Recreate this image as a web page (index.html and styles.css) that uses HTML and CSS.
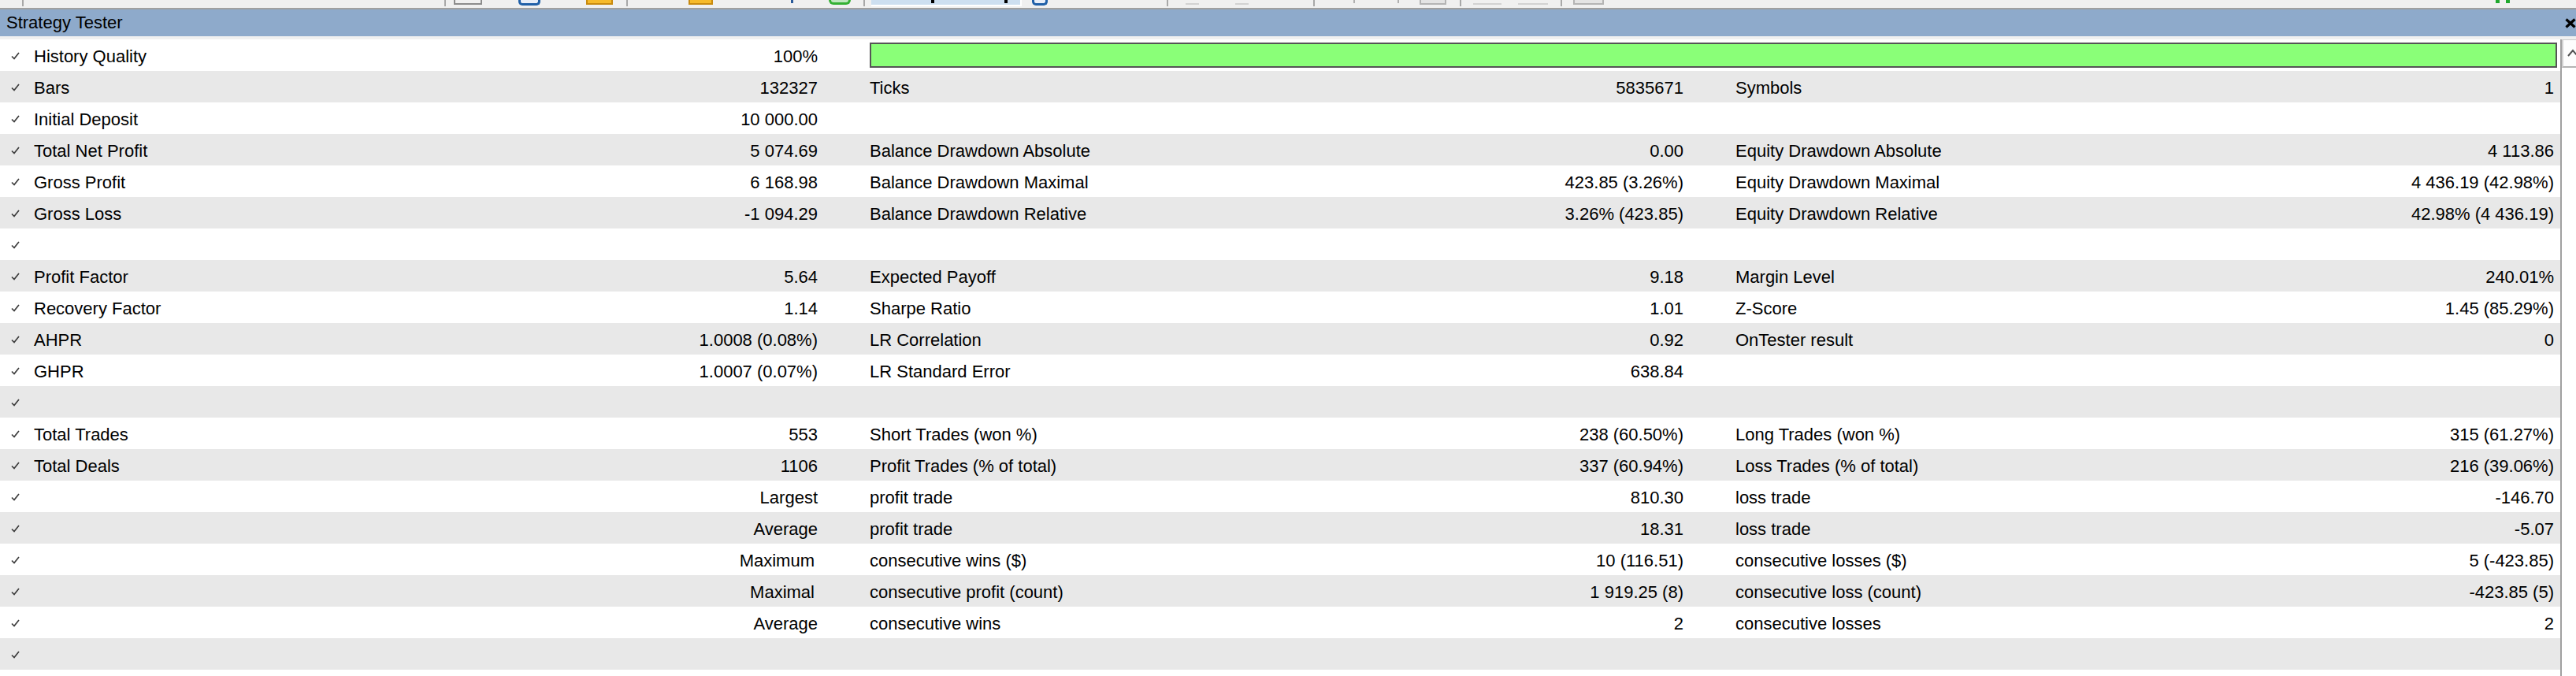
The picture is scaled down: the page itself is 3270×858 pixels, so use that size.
FILE: index.html
```html
<!DOCTYPE html>
<html>
<head>
<meta charset="utf-8">
<title>Strategy Tester</title>
<link rel="stylesheet" href="styles.css">
</head>
<body>
<div class="toolbar">
  <i class="sep m1"></i>
  <i class="sep m2"></i>
  <i class="gico w36 m3"></i>
  <i class="bico w28 m4"></i>
  <i class="oico w34 m5"></i>
  <i class="sep m6"></i>
  <i class="oico w31 m7"></i>
  <i class="tick dk m8"></i>
  <i class="gnico m9"></i>
  <i class="sep m10"></i>
  <i class="sel m11"><b class="dot d1"></b><b class="dot d2"></b></i>
  <i class="bico w20 m12"></i>
  <i class="sep m13"></i>
  <i class="lt w17 m14"></i>
  <i class="lt w17 m15"></i>
  <i class="sep m16"></i>
  <i class="tick m17"></i>
  <i class="tick m18"></i>
  <i class="gico lite w34 m19"></i>
  <i class="sep m20"></i>
  <i class="lt w36 m21"></i>
  <i class="lt w38 m22"></i>
  <i class="sep m23"></i>
  <i class="gico lite w39 m24"></i>
  <i class="grn m25"><b></b><b></b></i>
</div>
<div class="titlebar">
  <span class="title">Strategy Tester</span>
  <svg class="close" viewBox="0 0 14 13" width="14" height="13"><path d="M1.5 1.5L12.5 11.5M12.5 1.5L1.5 11.5" stroke="#000" stroke-width="3.2" fill="none"/></svg>
</div>
<div class="strip"></div>
<div class="main">
  <div class="table">
    <div class="row">
      <div class="c c1"><svg class="chk" viewBox="0 0 11 10"><path d="M1 5.5L4 8.5L10 1" stroke="#3c3c3c" stroke-width="1.7" fill="none"/></svg><span class="lbl">History Quality</span><span>100%</span></div>
      <div class="bar"></div>
    </div>
    <div class="row">
      <div class="c c1"><svg class="chk" viewBox="0 0 11 10"><path d="M1 5.5L4 8.5L10 1" stroke="#3c3c3c" stroke-width="1.7" fill="none"/></svg><span class="lbl">Bars</span><span>132327</span></div>
      <div class="c"><span class="lbl">Ticks</span><span>5835671</span></div>
      <div class="c c3"><span class="lbl">Symbols</span><span>1</span></div>
    </div>
    <div class="row">
      <div class="c c1"><svg class="chk" viewBox="0 0 11 10"><path d="M1 5.5L4 8.5L10 1" stroke="#3c3c3c" stroke-width="1.7" fill="none"/></svg><span class="lbl">Initial Deposit</span><span>10 000.00</span></div>
      <div class="c"></div>
      <div class="c c3"></div>
    </div>
    <div class="row">
      <div class="c c1"><svg class="chk" viewBox="0 0 11 10"><path d="M1 5.5L4 8.5L10 1" stroke="#3c3c3c" stroke-width="1.7" fill="none"/></svg><span class="lbl">Total Net Profit</span><span>5 074.69</span></div>
      <div class="c"><span class="lbl">Balance Drawdown Absolute</span><span>0.00</span></div>
      <div class="c c3"><span class="lbl">Equity Drawdown Absolute</span><span>4 113.86</span></div>
    </div>
    <div class="row">
      <div class="c c1"><svg class="chk" viewBox="0 0 11 10"><path d="M1 5.5L4 8.5L10 1" stroke="#3c3c3c" stroke-width="1.7" fill="none"/></svg><span class="lbl">Gross Profit</span><span>6 168.98</span></div>
      <div class="c"><span class="lbl">Balance Drawdown Maximal</span><span>423.85 (3.26%)</span></div>
      <div class="c c3"><span class="lbl">Equity Drawdown Maximal</span><span>4 436.19 (42.98%)</span></div>
    </div>
    <div class="row">
      <div class="c c1"><svg class="chk" viewBox="0 0 11 10"><path d="M1 5.5L4 8.5L10 1" stroke="#3c3c3c" stroke-width="1.7" fill="none"/></svg><span class="lbl">Gross Loss</span><span>-1 094.29</span></div>
      <div class="c"><span class="lbl">Balance Drawdown Relative</span><span>3.26% (423.85)</span></div>
      <div class="c c3"><span class="lbl">Equity Drawdown Relative</span><span>42.98% (4 436.19)</span></div>
    </div>
    <div class="row">
      <div class="c c1"><svg class="chk" viewBox="0 0 11 10"><path d="M1 5.5L4 8.5L10 1" stroke="#3c3c3c" stroke-width="1.7" fill="none"/></svg><span class="lbl"></span><span></span></div>
      <div class="c"></div>
      <div class="c c3"></div>
    </div>
    <div class="row">
      <div class="c c1"><svg class="chk" viewBox="0 0 11 10"><path d="M1 5.5L4 8.5L10 1" stroke="#3c3c3c" stroke-width="1.7" fill="none"/></svg><span class="lbl">Profit Factor</span><span>5.64</span></div>
      <div class="c"><span class="lbl">Expected Payoff</span><span>9.18</span></div>
      <div class="c c3"><span class="lbl">Margin Level</span><span>240.01%</span></div>
    </div>
    <div class="row">
      <div class="c c1"><svg class="chk" viewBox="0 0 11 10"><path d="M1 5.5L4 8.5L10 1" stroke="#3c3c3c" stroke-width="1.7" fill="none"/></svg><span class="lbl">Recovery Factor</span><span>1.14</span></div>
      <div class="c"><span class="lbl">Sharpe Ratio</span><span>1.01</span></div>
      <div class="c c3"><span class="lbl">Z-Score</span><span>1.45 (85.29%)</span></div>
    </div>
    <div class="row">
      <div class="c c1"><svg class="chk" viewBox="0 0 11 10"><path d="M1 5.5L4 8.5L10 1" stroke="#3c3c3c" stroke-width="1.7" fill="none"/></svg><span class="lbl">AHPR</span><span>1.0008 (0.08%)</span></div>
      <div class="c"><span class="lbl">LR Correlation</span><span>0.92</span></div>
      <div class="c c3"><span class="lbl">OnTester result</span><span>0</span></div>
    </div>
    <div class="row">
      <div class="c c1"><svg class="chk" viewBox="0 0 11 10"><path d="M1 5.5L4 8.5L10 1" stroke="#3c3c3c" stroke-width="1.7" fill="none"/></svg><span class="lbl">GHPR</span><span>1.0007 (0.07%)</span></div>
      <div class="c"><span class="lbl">LR Standard Error</span><span>638.84</span></div>
      <div class="c c3"></div>
    </div>
    <div class="row">
      <div class="c c1"><svg class="chk" viewBox="0 0 11 10"><path d="M1 5.5L4 8.5L10 1" stroke="#3c3c3c" stroke-width="1.7" fill="none"/></svg><span class="lbl"></span><span></span></div>
      <div class="c"></div>
      <div class="c c3"></div>
    </div>
    <div class="row">
      <div class="c c1"><svg class="chk" viewBox="0 0 11 10"><path d="M1 5.5L4 8.5L10 1" stroke="#3c3c3c" stroke-width="1.7" fill="none"/></svg><span class="lbl">Total Trades</span><span>553</span></div>
      <div class="c"><span class="lbl">Short Trades (won %)</span><span>238 (60.50%)</span></div>
      <div class="c c3"><span class="lbl">Long Trades (won %)</span><span>315 (61.27%)</span></div>
    </div>
    <div class="row">
      <div class="c c1"><svg class="chk" viewBox="0 0 11 10"><path d="M1 5.5L4 8.5L10 1" stroke="#3c3c3c" stroke-width="1.7" fill="none"/></svg><span class="lbl">Total Deals</span><span>1106</span></div>
      <div class="c"><span class="lbl">Profit Trades (% of total)</span><span>337 (60.94%)</span></div>
      <div class="c c3"><span class="lbl">Loss Trades (% of total)</span><span>216 (39.06%)</span></div>
    </div>
    <div class="row">
      <div class="c c1"><svg class="chk" viewBox="0 0 11 10"><path d="M1 5.5L4 8.5L10 1" stroke="#3c3c3c" stroke-width="1.7" fill="none"/></svg><span class="lbl"></span><span>Largest</span></div>
      <div class="c"><span class="lbl">profit trade</span><span>810.30</span></div>
      <div class="c c3"><span class="lbl">loss trade</span><span>-146.70</span></div>
    </div>
    <div class="row">
      <div class="c c1"><svg class="chk" viewBox="0 0 11 10"><path d="M1 5.5L4 8.5L10 1" stroke="#3c3c3c" stroke-width="1.7" fill="none"/></svg><span class="lbl"></span><span>Average</span></div>
      <div class="c"><span class="lbl">profit trade</span><span>18.31</span></div>
      <div class="c c3"><span class="lbl">loss trade</span><span>-5.07</span></div>
    </div>
    <div class="row">
      <div class="c c1"><svg class="chk" viewBox="0 0 11 10"><path d="M1 5.5L4 8.5L10 1" stroke="#3c3c3c" stroke-width="1.7" fill="none"/></svg><span class="lbl"></span><span class="trail">Maximum</span></div>
      <div class="c"><span class="lbl">consecutive wins ($)</span><span>10 (116.51)</span></div>
      <div class="c c3"><span class="lbl">consecutive losses ($)</span><span>5 (-423.85)</span></div>
    </div>
    <div class="row">
      <div class="c c1"><svg class="chk" viewBox="0 0 11 10"><path d="M1 5.5L4 8.5L10 1" stroke="#3c3c3c" stroke-width="1.7" fill="none"/></svg><span class="lbl"></span><span class="trail">Maximal</span></div>
      <div class="c"><span class="lbl">consecutive profit (count)</span><span>1 919.25 (8)</span></div>
      <div class="c c3"><span class="lbl">consecutive loss (count)</span><span>-423.85 (5)</span></div>
    </div>
    <div class="row">
      <div class="c c1"><svg class="chk" viewBox="0 0 11 10"><path d="M1 5.5L4 8.5L10 1" stroke="#3c3c3c" stroke-width="1.7" fill="none"/></svg><span class="lbl"></span><span>Average</span></div>
      <div class="c"><span class="lbl">consecutive wins</span><span>2</span></div>
      <div class="c c3"><span class="lbl">consecutive losses</span><span>2</span></div>
    </div>
    <div class="row">
      <div class="c c1"><svg class="chk" viewBox="0 0 11 10"><path d="M1 5.5L4 8.5L10 1" stroke="#3c3c3c" stroke-width="1.7" fill="none"/></svg><span class="lbl"></span><span></span></div>
      <div class="c"></div>
      <div class="c c3"></div>
    </div>
  </div>
  <div class="scroll">
    <div class="sbtn"><svg class="arrow" viewBox="0 0 16 12" width="16" height="12"><path d="M2 10L8 3L14 10" stroke="#505050" stroke-width="2" fill="none"/></svg></div>
  </div>
</div>
</body>
</html>
```

FILE: styles.css
```css
* { box-sizing: border-box; }

body {
  margin: 0;
  width: 3270px;
  height: 858px;
  overflow: hidden;
  background: #ffffff;
  font-family: "Liberation Sans", Arial, sans-serif;
  font-size: 22px;
  color: #000;
}

/* ---------- toolbar (cut off at top) ---------- */
.toolbar {
  height: 12px;
  background: #f0f0f0;
  border-bottom: 2px solid #a0a0a0;
  display: flex;
  align-items: flex-start;
  overflow: hidden;
}
.toolbar i { display: block; flex: none; font-style: normal; }
.sep { width: 2px; height: 8px; background: #a8a8a8; }
.gico { height: 6px; border: 2px solid #8c8c8c; border-top: none; }
.gico.lite { border-color: #b4b4b4; background: #e4e4e4; }
.bico { height: 7px; border: 3px solid #2060a8; border-top: none; border-radius: 0 0 5px 5px; background: #e8eef8; }
.oico { height: 6px; background: #f6ba2a; border: 2px solid #c88a10; border-top: none; }
.tick { width: 2px; height: 4px; background: #b0b0b0; }
.tick.dk { width: 3px; background: #2a5a9a; }
.gnico { width: 28px; height: 6px; border: 3px solid #33b133; border-top: none; border-radius: 0 0 12px 12px; background: #bfe8bf; }
.sel { width: 191px; height: 8px; background: #cddff0; border-right: 2px solid #fff; border-bottom: 2px solid #fff; position: relative; }
.dot { position: absolute; top: 0; width: 4px; height: 4px; background: #000; }
.d1 { left: 76px; }
.d2 { left: 169px; }
.lt { height: 2px; margin-top: 4px; background: #d2d2d2; }
.grn { display: flex !important; gap: 8px; }
.grn b { display: block; width: 5px; height: 4px; background: #1fa82e; }

.w17 { width: 17px; }
.w20 { width: 20px; }
.w28 { width: 28px; }
.w31 { width: 31px; }
.w34 { width: 34px; }
.w36 { width: 36px; }
.w38 { width: 38px; }
.w39 { width: 39px; }

.m1 { margin-left: 28px; }
.m2 { margin-left: 534px; }
.m3 { margin-left: 10px; }
.m4 { margin-left: 46px; }
.m5 { margin-left: 58px; }
.m6 { margin-left: 17px; }
.m7 { margin-left: 77px; }
.m8 { margin-left: 99px; }
.m9 { margin-left: 45px; }
.m10 { margin-left: 16px; }
.m11 { margin-left: 8px; }
.m12 { margin-left: 13px; }
.m13 { margin-left: 151px; }
.m14 { margin-left: 22px; }
.m15 { margin-left: 46px; }
.m16 { margin-left: 82px; }
.m17 { margin-left: 49px; }
.m18 { margin-left: 54px; }
.m19 { margin-left: 26px; }
.m20 { margin-left: 17px; }
.m21 { margin-left: 15px; }
.m22 { margin-left: 21px; }
.m23 { margin-left: 16px; }
.m24 { margin-left: 14px; }
.m25 { margin-left: 1132px; }

/* ---------- title bar ---------- */
.titlebar {
  height: 34px;
  background: #8eaacb;
  display: flex;
  align-items: center;
  justify-content: space-between;
  padding-left: 8px;
}
.title { line-height: 34px; }
.close { display: block; flex: none; }

.strip { height: 4px; background: #f0f0f0; }

/* ---------- report table ---------- */
.main { display: flex; height: 808px; }
.table { width: 3250px; flex: none; }

.row {
  display: grid;
  grid-template-columns: 1071px 1099px 1fr;
  height: 40px;
  background: #ffffff;
}
.row:nth-child(even) { background: #e8e8e8; }

.c {
  display: flex;
  padding: 4px 33px 0 33px;
  line-height: 36px;
  white-space: nowrap;
  min-width: 0;
}
.c1 { padding-left: 14px; }
.c3 { padding-right: 8px; }
.lbl { flex: 1; }
.trail { margin-right: 4px; }

.chk {
  display: block;
  flex: none;
  width: 11px;
  height: 10px;
  margin-top: 12px;
  margin-right: 18px;
}

.bar {
  grid-column: 2 / 4;
  margin: 4px 4px 4px 33px;
  border: 2px solid #555555;
  background: #8aff78;
}

/* ---------- scrollbar ---------- */
.scroll {
  flex: 1;
  border-left: 2px solid #a0a0a0;
  background: #ffffff;
}
.sbtn {
  height: 36px;
  border-top: 1px solid #c8c8c8;
  border-left: 2px solid #d0d0d0;
  border-bottom: 2px solid #b4b4b4;
  background: #fdfdfd;
  padding: 10px 0 0 4px;
  overflow: hidden;
}
.arrow { display: block; }
```
